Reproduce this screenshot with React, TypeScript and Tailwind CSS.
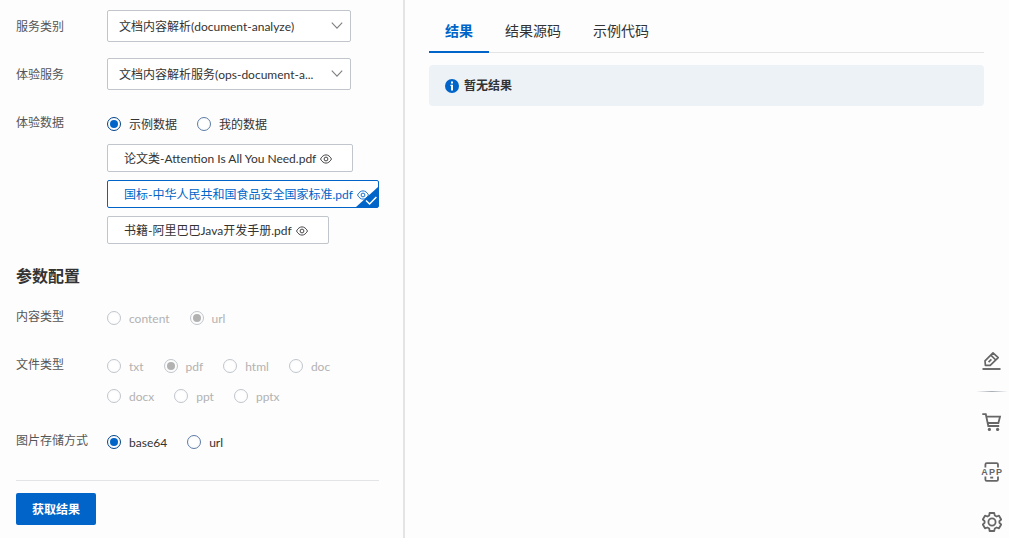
import { useState, type ReactNode } from "react";

function Field({ label, className = "", children }: { label: string; className?: string; children: ReactNode }) {
  return (
    <div className={`flex items-start ${className}`}>
      <div className="flex h-8 w-[91px] shrink-0 items-center pt-0.5 text-[#555555]">{label}</div>
      <div className="min-w-0 flex-1">{children}</div>
    </div>
  );
}

function SelectBox({ label, option }: { label: string; option: string }) {
  return (
    <div className="relative w-61">
      <select
        aria-label={label}
        className="block h-8 w-full appearance-none rounded-xs border border-[#c0c6cc] bg-white pt-0.5 pr-6 pl-[11px] text-[#333333] outline-none"
      >
        <option>{option}</option>
      </select>
      <svg className="pointer-events-none absolute top-2.5 right-2 h-3 w-3" viewBox="0 0 12 12" fill="none" stroke="#808080" strokeWidth="1.1">
        <path d="M0.8 2.6 L6 8.2 L11.2 2.6" />
      </svg>
    </div>
  );
}

function RadioGroup({ name, options, initial, disabled = false }: { name: string; options: string[]; initial: string; disabled?: boolean }) {
  const [value, setValue] = useState(initial);
  return (
    <div className="flex flex-wrap gap-x-5 gap-y-0.5 pt-1">
      {options.map((o) => (
        <label key={o} className={`flex h-7 items-center gap-2 ${disabled ? "text-[#b2b2b2]" : "text-[#333333]"}`}>
          <input
            type="radio"
            name={name}
            checked={value === o}
            disabled={disabled}
            onChange={() => setValue(o)}
            className="m-0 h-3.5 w-3.5 shrink-0 appearance-none rounded-full border border-[#5c7ba6] bg-white bg-clip-content p-0.5 checked:border-[#00438a] checked:bg-[#0064c8] disabled:border-[#c0c6cc] disabled:checked:bg-[#b2b2b2]"
          />
          <span className="pt-0.5">{o}</span>
        </label>
      ))}
    </div>
  );
}

function Eye() {
  return (
    <svg className="mt-0.5 h-3 w-3 shrink-0" viewBox="0 0 12 12" fill="none" stroke="currentColor" strokeWidth="0.9">
      <path d="M0.5 6 C2 3.2 3.9 1.9 6 1.9 S10 3.2 11.5 6 C10 8.8 8.1 10.1 6 10.1 S2 8.8 0.5 6 Z" />
      <circle cx="6" cy="6" r="1.9" />
    </svg>
  );
}

const files = ["论文类-Attention Is All You Need.pdf", "国标-中华人民共和国食品安全国家标准.pdf", "书籍-阿里巴巴Java开发手册.pdf"];

function FileList() {
  const [selected, setSelected] = useState(1);
  return (
    <div className="mt-1.5 flex flex-col items-start gap-2">
      {files.map((f, i) => (
        <button
          key={f}
          type="button"
          aria-pressed={selected === i}
          onClick={() => setSelected(i)}
          className={`relative flex h-7 max-w-full items-center gap-1 rounded-xs border bg-white pr-5 pl-4 whitespace-nowrap ${
            selected === i ? "border-[#0064c8] text-[#0064c8]" : "border-[#c0c6cc] text-[#333333]"
          }`}
        >
          <span className="pt-0.5">{f}</span>
          <Eye />
          {selected === i && (
            <svg className="absolute right-0 bottom-0 h-5 w-[22px]" viewBox="0 0 22 20">
              <path d="M22 0 V20 H0 Z" fill="#0064c8" />
              <path d="M10 13.5 L13.6 17 L20.4 10" fill="none" stroke="#fff" strokeWidth="1.5" />
            </svg>
          )}
        </button>
      ))}
    </div>
  );
}

function Tabs() {
  const tabs = ["结果", "结果源码", "示例代码"];
  const [active, setActive] = useState(0);
  return (
    <div role="tablist" className="flex border-b border-[#e3e4e6] text-sm">
      {tabs.map((t, i) => (
        <button
          key={t}
          role="tab"
          type="button"
          aria-selected={active === i}
          onClick={() => setActive(i)}
          className={`-mb-px h-11 border-b-2 px-4 pt-0.5 ${
            active === i ? "border-[#0064c8] font-bold text-[#0064c8]" : "border-transparent text-[#333333]"
          }`}
        >
          {t}
        </button>
      ))}
    </div>
  );
}

const iconButton = "flex h-8 w-8 items-center justify-center";

function SideTools() {
  return (
    <nav className="absolute right-px bottom-0 flex flex-col items-center text-[#666666]">
      <button type="button" aria-label="反馈" className={iconButton}>
        <svg className="h-5 w-5" viewBox="0 0 20 20" fill="none" stroke="currentColor" strokeWidth="1.7">
          <path d="M0.5 18 H18.5" strokeWidth="1.9" />
          <path d="M3.4 14.4 L3 9.8 L11 1.8 L16.2 6.6 L8.2 14.4 Z" strokeLinejoin="round" />
          <path d="M8.8 4.2 L13.8 9 M6.6 11.2 L9.4 8.4" />
        </svg>
      </button>
      <div className="my-3.5 h-px w-8 bg-gradient-to-r from-transparent via-[#a8adb5] to-transparent" />
      <button type="button" aria-label="购物车" className={iconButton}>
        <svg className="h-5 w-5" viewBox="0 0 20 20" fill="none" stroke="currentColor" strokeWidth="1.8">
          <path d="M0.3 2.2 H3.8 L6.3 14 H17.2" />
          <path d="M4.3 4.6 H18 L16.4 11 H5.6" />
          <circle cx="7.4" cy="17.4" r="1.6" fill="currentColor" stroke="none" />
          <circle cx="15.6" cy="17.4" r="1.6" fill="currentColor" stroke="none" />
        </svg>
      </button>
      <button type="button" aria-label="APP" className={`mt-[18px] ${iconButton}`}>
        <svg className="h-5 w-5 overflow-visible" viewBox="0 0 20 20" fill="none" stroke="currentColor" strokeWidth="1.8">
          <path d="M3.4 5.5 V2.6 Q3.4 1.2 4.8 1.2 H14.6 Q16 1.2 16 2.6 V5.5 M3.4 14.5 V17.4 Q3.4 18.8 4.8 18.8 H14.6 Q16 18.8 16 17.4 V14.5" />
          <path d="M8.2 15.6 H11.2" />
          <text x="2.6 10 17" y="13" textAnchor="middle" fill="currentColor" stroke="none" fontSize="9" fontWeight="700" fontFamily="Liberation Sans, sans-serif">
            APP
          </text>
        </svg>
      </button>
      <button type="button" aria-label="设置" className={`mt-[18px] ${iconButton}`}>
        <svg className="h-5 w-5" viewBox="0 0 20 20" fill="none" stroke="currentColor" strokeWidth="1.8" strokeLinejoin="round">
          <path d="M7.6 1 H12.2 L12.8 3.5 L14.6 4.5 L17 3.7 L19.2 7.5 L17.4 9.2 V10.8 L19.2 12.5 L17 16.3 L14.6 15.5 L12.8 16.5 L12.2 19 H7.6 L7.2 16.5 L5.4 15.5 L3 16.3 L0.8 12.5 L2.6 10.8 V9.2 L0.8 7.5 L3 3.7 L5.4 4.5 L7.2 3.5 Z" />
          <circle cx="10" cy="10" r="3.6" />
        </svg>
      </button>
    </nav>
  );
}

export default function App() {
  return (
    <div className="relative flex min-h-screen bg-[#fdfdfd] font-['Lato','Noto_Sans_CJK_SC',sans-serif] text-xs text-[#333333]">
      <aside className="w-[405px] shrink-0 border-r-2 border-[#e3e4e6] pt-2.5 pr-6 pb-3 pl-4">
        <Field label="服务类别">
          <SelectBox label="服务类别" option="文档内容解析(document-analyze)" />
        </Field>
        <Field label="体验服务" className="mt-4">
          <SelectBox label="体验服务" option="文档内容解析服务(ops-document-a..." />
        </Field>
        <Field label="体验数据" className="mt-4">
          <RadioGroup name="source" options={["示例数据", "我的数据"]} initial="示例数据" />
          <FileList />
        </Field>
        <h2 className="mt-5 text-base leading-6 font-bold">参数配置</h2>
        <Field label="内容类型" className="mt-3">
          <RadioGroup name="content-type" options={["content", "url"]} initial="url" disabled />
        </Field>
        <Field label="文件类型" className="mt-4">
          <RadioGroup name="file-type" options={["txt", "pdf", "html", "doc", "docx", "ppt", "pptx"]} initial="pdf" disabled />
        </Field>
        <Field label="图片存储方式" className="mt-3.5">
          <RadioGroup name="storage" options={["base64", "url"]} initial="base64" />
        </Field>
        <hr className="mt-6 border-[#e3e4e6]" />
        <button type="button" className="mt-3 h-8 rounded-xs bg-[#0064c8] px-4 pt-0.5 font-bold text-white">
          获取结果
        </button>
      </aside>
      <main className="min-w-0 flex-1 pt-[9px] pr-[25px] pl-6">
        <Tabs />
        <div className="mt-3 flex h-[41px] items-center gap-[5px] rounded bg-[#edf2f6] px-4 font-bold">
          <svg className="h-3.5 w-3.5" viewBox="0 0 14 14">
            <circle cx="7" cy="7" r="7" fill="#0064c8" />
            <path d="M6 2.6 H8 V4.6 H6 Z M5.4 5.8 H8 V11.4 H6 V7 H5.4 Z" fill="#fff" />
          </svg>
          <span>暂无结果</span>
        </div>
      </main>
      <SideTools />
    </div>
  );
}
